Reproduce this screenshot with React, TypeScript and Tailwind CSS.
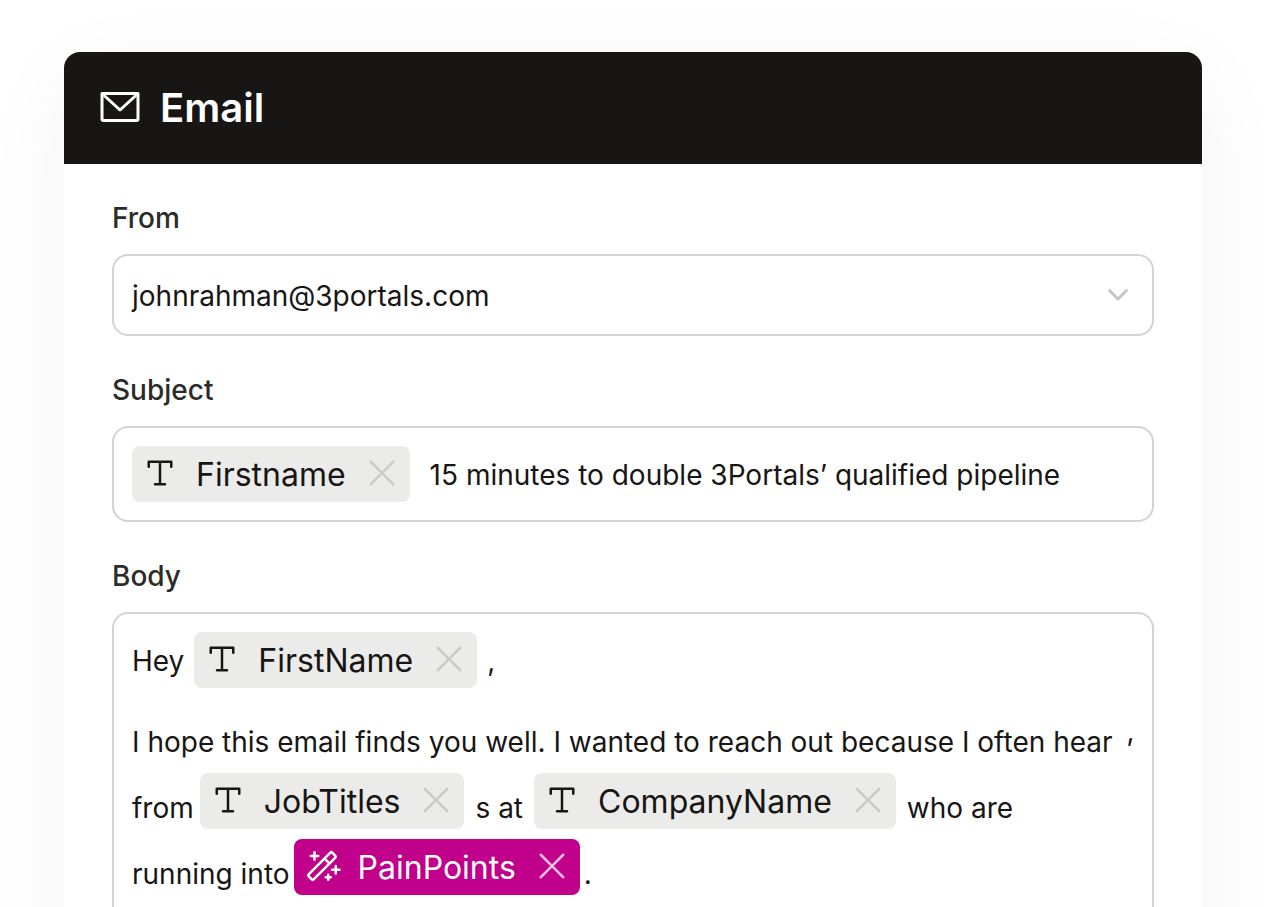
import { ReactNode, useState } from "react";
import { PiMagicWand, PiTextT, PiX } from "react-icons/pi";
import clsx from "clsx";

const senders = ["johnrahman@3portals.com"];

function EnvelopeIcon({ className }: { className?: string }) {
  return (
    <svg viewBox="0 0 48 48" fill="none" stroke="currentColor" strokeWidth={3} strokeLinejoin="round" className={className} aria-hidden>
      <path d="M6 9.5H42V35a1.5 1.5 0 0 1-1.5 1.5h-33A1.5 1.5 0 0 1 6 35Z" />
      <path d="M41.5 10 24 26 6.5 10" strokeLinecap="round" />
    </svg>
  );
}

function ChevronIcon({ className }: { className?: string }) {
  return (
    <svg viewBox="0 0 28 28" fill="none" stroke="currentColor" strokeWidth={3} strokeLinecap="round" strokeLinejoin="round" className={className} aria-hidden>
      <path d="m5.5 9.5 8.5 8.5 8.5-8.5" />
    </svg>
  );
}

type TokenProps = {
  name: string;
  variant?: "text" | "ai";
};

function Token({ name, variant = "text" }: TokenProps) {
  const ai = variant === "ai";
  const Icon = ai ? PiMagicWand : PiTextT;
  return (
    <span
      contentEditable={false}
      className={clsx(
        "inline-flex h-14 shrink-0 items-center rounded-lg px-2 pb-[2px] text-[32px] leading-10",
        ai ? "bg-[#c1008b] text-white" : "bg-[#ebebe9] text-[#171614]"
      )}
    >
      <Icon className="size-10" aria-hidden />
      <span className="mx-4 pt-1">{name}</span>
      <button type="button" aria-label={`Remove ${name}`} className={ai ? "text-[#ebc0df]" : "text-[#cbcbc9]"}>
        <PiX className="size-10" aria-hidden />
      </button>
    </span>
  );
}

function Field({ id, label, children }: { id: string; label: string; children: ReactNode }) {
  return (
    <div className="flex flex-col gap-4">
      <label id={`${id}-label`} htmlFor={id} className="text-[28px] leading-10 font-medium text-[#2b2b2a]">
        {label}
      </label>
      {children}
    </div>
  );
}

export default function App() {
  const [sender, setSender] = useState(senders[0]);
  const [subject, setSubject] = useState("15 minutes to double 3Portals’ qualified pipeline");

  return (
    <main className="h-screen overflow-hidden bg-white pt-[52px] pr-[62px] pl-16 font-['Inter',sans-serif] text-[28px] text-[#171614]">
      <section className="min-h-full rounded-2xl bg-white shadow-[0_24px_90px_rgba(0,0,0,0.05)]">
        <header className="flex h-28 items-center gap-4 rounded-t-2xl bg-[#171614] px-8 text-white">
          <EnvelopeIcon className="size-12" />
          <h1 className="text-[40px] leading-12 font-semibold">Email</h1>
        </header>

        <form className="flex flex-col gap-[34px] px-12 py-[34px]">
          <Field id="from" label="From">
            <div className="grid items-center">
              <select
                id="from"
                value={sender}
                onChange={(e) => setSender(e.target.value)}
                className="col-start-1 row-start-1 h-[82px] w-full appearance-none rounded-2xl border-2 border-[#d3d3d1] bg-white px-3 pt-[2px] indent-[6px]"
              >
                {senders.map((s) => (
                  <option key={s}>{s}</option>
                ))}
              </select>
              <ChevronIcon className="pointer-events-none col-start-1 row-start-1 mr-[22px] size-7 justify-self-end text-[#c6c6c4]" />
            </div>
          </Field>

          <Field id="subject" label="Subject">
            <div className="flex items-center gap-5 rounded-2xl border-2 border-[#d3d3d1] p-[18px]">
              <Token name="Firstname" />
              <input
                id="subject"
                value={subject}
                onChange={(e) => setSubject(e.target.value)}
                className="min-w-0 flex-1 pt-[2px] outline-none"
              />
            </div>
          </Field>

          <Field id="body" label="Body">
            <div
              id="body"
              role="textbox"
              aria-multiline
              aria-labelledby="body-label"
              contentEditable
              suppressContentEditableWarning
              className="flex min-h-[480px] flex-col gap-[10px] rounded-2xl border-2 border-[#d3d3d1] p-[18px] leading-[42px] outline-none"
            >
              <div className="flex items-center gap-[10px]">
                <span className="pt-[2px]">Hey</span>
                <Token name="FirstName" />
                <span className="pt-[2px]">,</span>
              </div>
              <div className="mt-[23px] flex gap-[14px] whitespace-nowrap">
                <span>I hope this email finds you well. I wanted to reach out because I often hear</span>
                <span className="leading-5">,</span>
              </div>
              <div className="flex items-end">
                <span className="mr-[6px]">from</span>
                <Token name="JobTitles" />
                <span className="mx-[11px]">s at</span>
                <Token name="CompanyName" />
                <span className="mx-[11px]">who are</span>
              </div>
              <div className="flex items-end gap-1">
                <span>running into</span>
                <Token name="PainPoints" variant="ai" />
                <span>.</span>
              </div>
            </div>
          </Field>
        </form>
      </section>
    </main>
  );
}
